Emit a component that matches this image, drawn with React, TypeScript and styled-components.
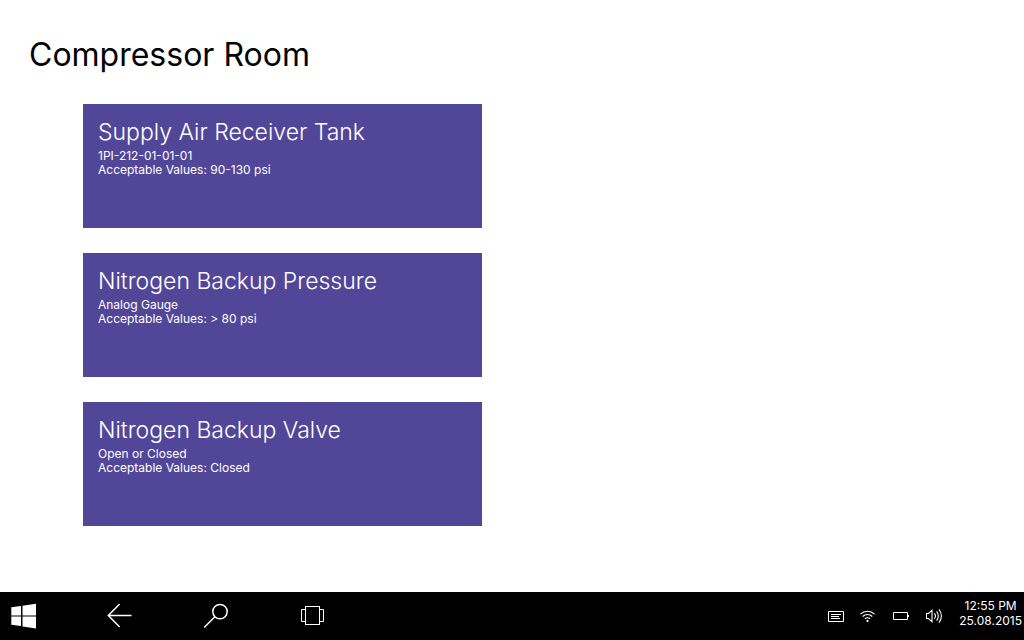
import React from "react";
import styled, { createGlobalStyle } from "styled-components";

const GlobalStyle = createGlobalStyle`
  * { box-sizing: border-box; }
  body { margin: 0; background: #fff; font-family: Inter, "Liberation Sans", sans-serif; }
`;

const Page = styled.div`
  display: flex;
  flex-direction: column;
  min-height: 100vh;
`;

const Main = styled.main`
  flex: 1;
  padding: 32px 29px 24px;
`;

const Title = styled.h1`
  margin: 0;
  font-size: 32px;
  line-height: 46px;
  font-weight: 400;
  color: #000;
`;

const CardList = styled.section`
  display: flex;
  flex-direction: column;
  gap: 25px;
  margin-top: 26px;
  padding-left: 54px;
`;

const Card = styled.article`
  width: 100%;
  max-width: 399px;
  min-height: 124px;
  padding: 12px 15px;
  background: #524699;
  color: #fff;
`;

const CardTitle = styled.h2`
  margin: 0;
  font-size: 23px;
  line-height: 33px;
  font-weight: 300;
`;

const CardLine = styled.p`
  margin: 0;
  font-size: 12px;
  line-height: 14px;
`;

const Taskbar = styled.footer`
  display: flex;
  align-items: center;
  justify-content: space-between;
  min-height: 48px;
  background: #000;
  color: #fff;
`;

const Nav = styled.nav`
  display: flex;
`;

const NavButton = styled.button`
  display: flex;
  align-items: center;
  width: 96px;
  height: 48px;
  padding: 0 0 0 11px;
  border: 0;
  background: transparent;
  color: inherit;
`;

const Tray = styled.div`
  display: flex;
  align-items: center;
  gap: 16px;
  padding-right: 2px;
`;

const Icon = styled.svg`
  display: block;
  fill: none;
  stroke: currentColor;
`;

const Clock = styled.time`
  padding-bottom: 6px;
  font-size: 12px;
  line-height: 15px;
  text-align: center;
`;

const cards = [
  { title: "Supply Air Receiver Tank", detail: "1PI-212-01-01-01", values: "90-130 psi" },
  { title: "Nitrogen Backup Pressure", detail: "Analog Gauge", values: "> 80 psi" },
  { title: "Nitrogen Backup Valve", detail: "Open or Closed", values: "Closed" },
];

export default function App() {
  return (
    <Page>
      <GlobalStyle />
      <Main>
        <Title>Compressor Room</Title>
        <CardList>
          {cards.map((c) => (
            <Card key={c.title}>
              <CardTitle>{c.title}</CardTitle>
              <CardLine>{c.detail}</CardLine>
              <CardLine>Acceptable Values: {c.values}</CardLine>
            </Card>
          ))}
        </CardList>
      </Main>
      <Taskbar>
        <Nav aria-label="Taskbar">
          <NavButton type="button" aria-label="Start">
            <Icon width="26" height="26" viewBox="0 0 26 26">
              <path
                d="M.3 4.3L10 3v9.5H.3zM11.5 2.7L25 .8v11.7H11.5zM.3 13.6H10V23L.3 21.8zM11.5 13.6H25v11.8l-13.5-1.9z"
                fill="currentColor"
                stroke="none"
              />
            </Icon>
          </NavButton>
          <NavButton type="button" aria-label="Back">
            <Icon width="26" height="26" viewBox="0 0 26 26" strokeWidth="1.5">
              <path d="M24.5 12.5H1.5M12.7 1L1.3 12.5L12.7 24" />
            </Icon>
          </NavButton>
          <NavButton type="button" aria-label="Search">
            <Icon width="26" height="26" viewBox="0 0 26 26" strokeWidth="1.5">
              <circle cx="17" cy="8.6" r="7.2" />
              <path d="M11.9 13.7L1.2 24.5" />
            </Icon>
          </NavButton>
          <NavButton type="button" aria-label="Task view">
            <Icon width="26" height="26" viewBox="0 0 26 26">
              <rect x="6.5" y="3.5" width="14" height="18" />
              <path d="M6.5 6.5h-4v12h4M20.5 6.5h4v12h-4" />
            </Icon>
          </NavButton>
        </Nav>
        <Tray>
          <Icon width="16" height="16" viewBox="0 0 16 16" role="img" aria-label="Notifications">
            <path d="M.5 3.5h15v10H.5zM3 6.5h10M3 8.5h8M3 10.5h9" />
          </Icon>
          <Icon width="16" height="16" viewBox="0 0 16 16" role="img" aria-label="Wi-Fi">
            <path d="M.5 6.1a10 10 0 0 1 14 0M2.7 8.5a6.8 6.8 0 0 1 9.6 0M4.9 10.8a3.7 3.7 0 0 1 5.2 0" strokeWidth="1.2" />
            <circle cx="7.5" cy="12.9" r="1.1" fill="currentColor" stroke="none" />
          </Icon>
          <Icon width="17" height="16" viewBox="0 0 17 16" role="img" aria-label="Battery">
            <path d="M1.5 4.5h14v7h-14zM16.5 7v2" />
          </Icon>
          <Icon width="18" height="16" viewBox="0 0 18 16" role="img" aria-label="Volume">
            <path d="M1.5 5.5h2L7 2.3v11.4L3.5 10.5h-2zM9.3 5.3a4 4 0 0 1 0 5.4M11.6 3.4a7 7 0 0 1 0 9.2M13.9 1.4a10 10 0 0 1 0 13.2" strokeWidth="1.1" />
          </Icon>
          <Clock dateTime="2015-08-25T12:55">
            12:55 PM
            <br />
            25.08.2015
          </Clock>
        </Tray>
      </Taskbar>
    </Page>
  );
}
